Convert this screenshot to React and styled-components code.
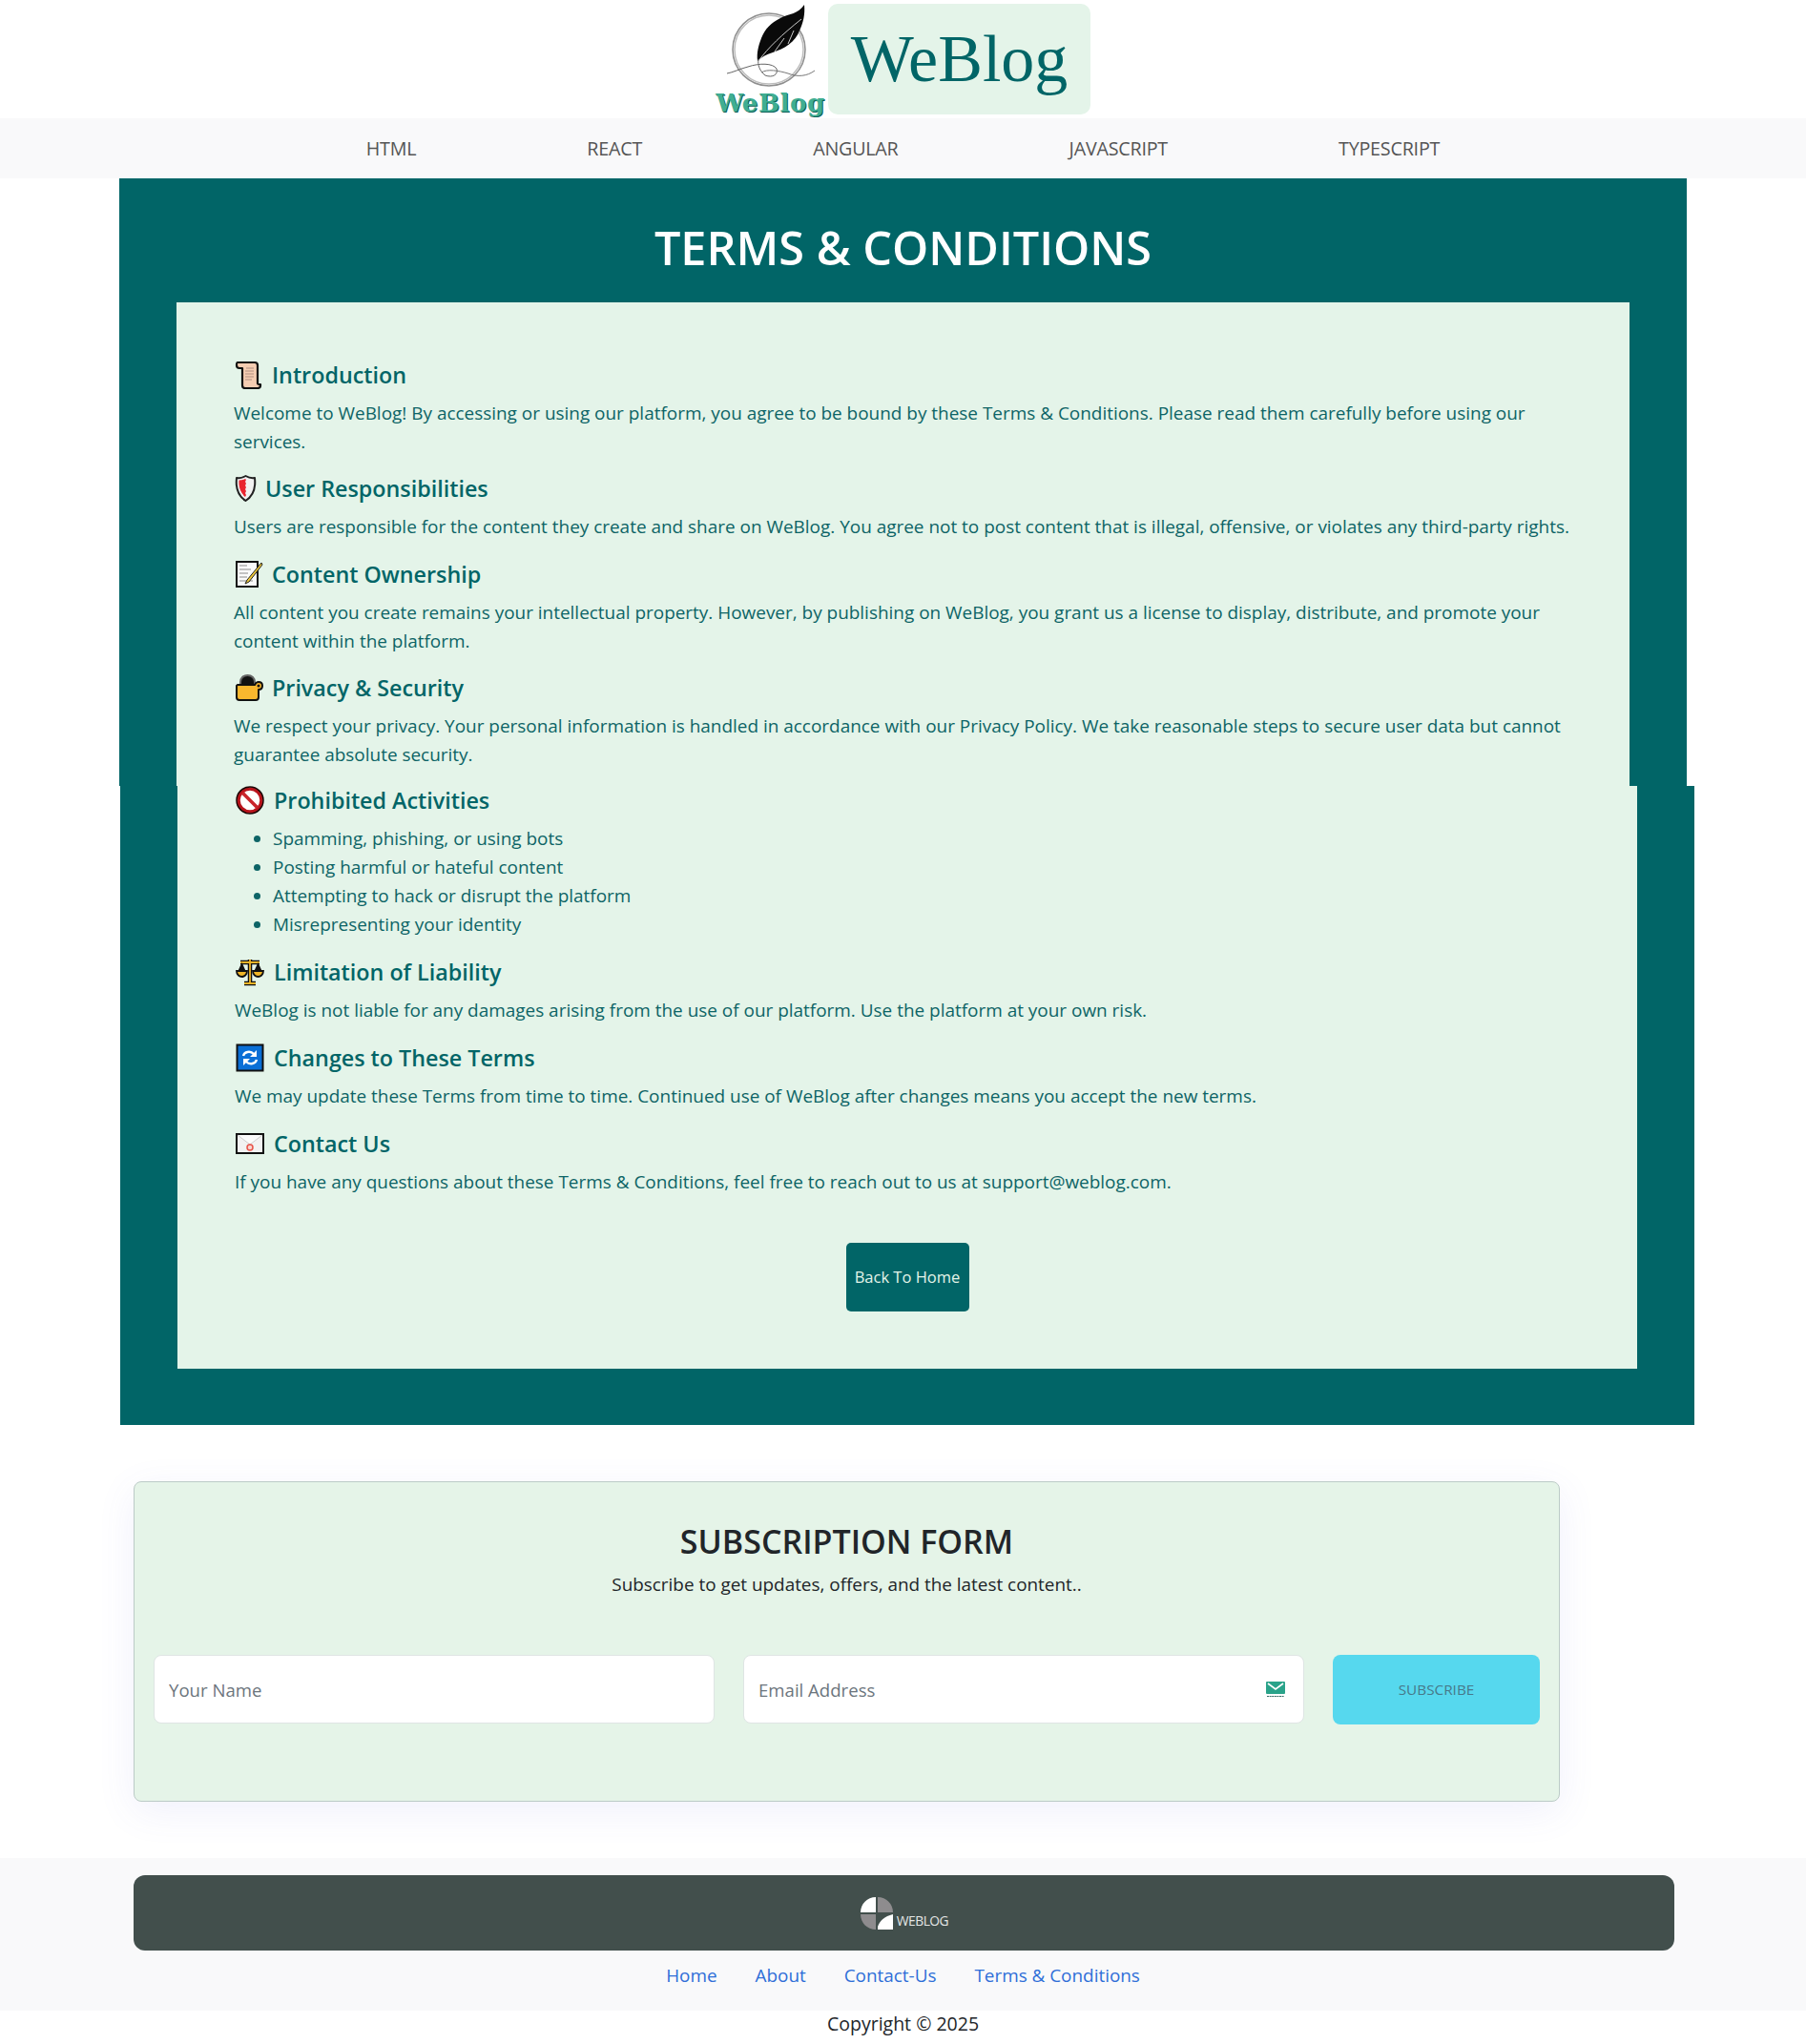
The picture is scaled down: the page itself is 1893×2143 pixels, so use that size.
import React from "react";
import styled, { createGlobalStyle } from "styled-components";

const FONT = `"Open Sans", "Noto Sans", sans-serif`;
const TEAL = "#016567";
const MINT = "#e4f4e9";

const Global = createGlobalStyle`
  * { box-sizing: border-box; }
  html, body { margin: 0; padding: 0; background: #fff; }
  body { font-family: ${FONT}; color: #212529; }
  input::placeholder { color: #6c757d; opacity: 1; }
`;

const Page = styled.div`
  width: 1893px;
  height: 2143px;
  overflow: hidden;
`;
const Brand = styled.header`
  height: 124px;
  display: flex;
  justify-content: center;
  align-items: flex-start;
  gap: 3px;
`;
const LogoMark = styled.div`
  width: 115px;
  display: flex;
  flex-direction: column;
  align-items: center;
`;
const LogoWord = styled.span`
  font-family: "DejaVu Serif", serif;
  font-weight: 700;
  font-size: 26px;
  line-height: 30px;
  letter-spacing: 0.6px;
  color: #3fae92;
  text-shadow: 1px 1px 0 #0d5f57;
  margin-top: 1px;
  white-space: nowrap;
`;
const BrandBox = styled.div`
  width: 275px;
  height: 116px;
  margin-top: 4px;
  background: ${MINT};
  border-radius: 10px;
  display: flex;
  align-items: center;
  justify-content: center;
  font-family: "Liberation Serif", serif;
  font-size: 70px;
  line-height: 1;
  color: ${TEAL};
`;
const NavBar = styled.nav`
  height: 63px;
  background: #f9f9fa;
  display: flex;
  justify-content: center;
  align-items: center;
  gap: 179px;
`;
const NavItem = styled.a`
  font-size: 19.7px;
  color: #555;
  letter-spacing: -0.2px;
`;
const Teal = styled.section`
  background: ${TEAL};
  width: ${(p) => p.$width}px;
  margin-left: ${(p) => p.$left}px;
  padding: 0 60px ${(p) => p.$bottom}px;
`;
const TitleBar = styled.div`
  height: 130px;
  padding-top: 14px;
  display: flex;
  align-items: center;
  justify-content: center;
`;
const Title = styled.h1`
  margin: 0;
  font-size: 48.6px;
  line-height: 60px;
  font-weight: 600;
  color: #fff;
`;
const Block = styled.div`
  &:last-child { margin-bottom: 0; }
`;
const Panel = styled.div`
  background: ${MINT};
  padding: ${(p) => p.$padding};
  ${Block} { margin-bottom: ${(p) => p.$blockGap}px; }
  ${Block}:last-child { margin-bottom: 0; }
`;
const Heading = styled.h2`
  margin: 0 0 ${(p) => (p.$tight ? 10 : 8)}px;
  padding-left: 1px;
  display: flex;
  align-items: center;
  gap: ${(p) => p.$gap}px;
  font-size: 23.3px;
  line-height: ${(p) => (p.$tight ? 30 : 34)}px;
  font-weight: 600;
  color: ${TEAL};
`;
const Body = styled.p`
  margin: 0;
  font-size: 18.95px;
  line-height: 30px;
  color: #0d6466;
`;
const List = styled.ul`
  margin: 0;
  padding-left: 40px;
  font-size: 18.95px;
  line-height: 30px;
  color: #0d6466;
`;
const Center = styled.div`
  display: flex;
  justify-content: center;
  margin-top: 49px;
`;
const BackButton = styled.button`
  width: 129px;
  height: 72px;
  border: 0;
  border-radius: 5px;
  background: ${TEAL};
  color: #e4f4e9;
  font-family: ${FONT};
  font-size: 16.5px;
  padding: 0;
`;
const Card = styled.section`
  width: 1495px;
  height: 336px;
  margin: 59px 0 59px 140px;
  padding: 40px 20px 0;
  background: #e5f4e8;
  border: 1px solid #bccbc7;
  border-radius: 8px;
  box-shadow: 0 10px 40px rgba(90, 90, 220, 0.09);
  text-align: center;
`;
const CardTitle = styled.h2`
  margin: 0 0 8px;
  font-size: 34px;
  line-height: 44px;
  font-weight: 600;
  color: #212529;
`;
const CardText = styled.p`
  margin: 0 0 59px;
  font-size: 18.9px;
  line-height: 30px;
  color: #212529;
`;
const FormRow = styled.form`
  display: flex;
  gap: 30px;
  align-items: center;
`;
const Field = styled.div`
  position: relative;
  width: 588px;
  height: 72px;
`;
const Input = styled.input`
  width: 100%;
  height: 100%;
  padding: 0 15px;
  border: 1px solid #dfe5e4;
  border-radius: 8px;
  background: #fff;
  font-family: ${FONT};
  font-size: 18.6px;
`;
const FieldIcon = styled.svg`
  position: absolute;
  right: 20px;
  top: 27px;
  width: 20px;
  height: 18px;
`;
const Subscribe = styled.button`
  width: 217px;
  height: 73px;
  border: 0;
  border-radius: 8px;
  background: #56d8ee;
  color: #47798a;
  font-family: ${FONT};
  font-size: 15.3px;
  padding: 0;
`;
const Footer = styled.footer`
  background: #f9f9fa;
  height: 160px;
  padding-top: 18px;
`;
const FootBar = styled.div`
  width: 1615px;
  height: 79px;
  margin-left: 140px;
  background: #424f4c;
  border-radius: 12px;
  display: flex;
  justify-content: center;
  padding-top: 22px;
  gap: 3px;
`;
const FootWord = styled.span`
  font-family: "Open Sans", sans-serif;
  font-size: 13.8px;
  line-height: 18px;
  height: 18px;
  margin-top: 17px;
  letter-spacing: -0.5px;
  color: #e4e6e5;
`;
const FootLinks = styled.div`
  height: 63px;
  padding-bottom: 10px;
  display: flex;
  justify-content: center;
  align-items: center;
  gap: 40px;
`;
const FootLink = styled.a`
  font-size: 18.9px;
  color: #2f6fd8;
`;
const Copyright = styled.div`
  text-align: center;
  font-size: 19.5px;
  line-height: 28px;
  color: #212529;
`;

const Emoji = styled.svg`
  width: ${(p) => p.$w || 30}px;
  height: 30px;
  flex: none;
`;

const Scroll = () => (
  <Emoji viewBox="0 0 30 30">
    <path d="M3 2h18c2 0 3 1 3 3v19c0 1 1 1 3 1v1c0 2-1 3-3 3H11c-2 0-3-1-3-3V8H5C3 8 2 7 2 5s0-3 1-3z" fill="#f5cdb2" stroke="#111" strokeWidth="2.200" strokeLinejoin="round" />
    <path d="M12 8h8M11 11h9M11 14h9M11 17h9M11 20h7" stroke="#b08f80" strokeWidth="1" />
  </Emoji>
);
const Shield = () => (
  <Emoji $w={23} viewBox="0 0 23 30">
    <path d="M11.500 2C15 4 18 4.500 21 4c1 9 0 18-9.500 24C2 22 1 13 2 4c3 .5 6 0 9.500-2z" fill="#f1f1f1" stroke="#222" strokeWidth="2" strokeLinejoin="round" />
    <path d="M11 5C9 6 7 6.500 4.500 6.500 4 13 5.500 19 11 24l1-2-1-2 1-2-1-2 1-2-1-2 1-2-1-2 1-2z" fill="#e9242f" />
  </Emoji>
);
const Memo = () => (
  <Emoji viewBox="0 0 30 30">
    <path d="M2 2h22v26H2z" fill="#fafafa" stroke="#111" strokeWidth="2" />
    <path d="M5 6h8M5 10h12M5 14h9M5 18h8M5 22h14" stroke="#8b8b8b" strokeWidth="1" />
    <path d="M28 3 13 21l-2 4 4-2L29 5z" fill="#f0c93a" stroke="#222" strokeWidth="1" />
  </Emoji>
);
const Lock = () => (
  <Emoji viewBox="0 0 30 30">
    <path d="M6 12V9c0-4 3-7 7.500-7S21 5 21 9v3" fill="#111" stroke="#666" strokeWidth="2" />
    <path d="M3 12h18c1-2 2-3 4-3 3 0 4 2 4 4 0 3-2 4-4 4v8c0 2-1 3-3 3H5c-2 0-3-1-3-3V13z" fill="#f9b72e" stroke="#111" strokeWidth="2" strokeLinejoin="round" />
    <circle cx="25" cy="13" r="1.500" fill="#111" />
  </Emoji>
);
const Prohibited = () => (
  <Emoji viewBox="0 0 30 30">
    <circle cx="15" cy="15" r="12" fill="#fff" stroke="#b8131b" strokeWidth="3.500" />
    <circle cx="15" cy="15" r="14" fill="none" stroke="#1a0505" strokeWidth="1.500" />
    <path d="M7 7l16 16" stroke="#c9242b" strokeWidth="3.500" />
  </Emoji>
);
const Scales = () => (
  <Emoji viewBox="0 0 30 30">
    <path d="M15 2v24M9 27h12M5 5h20" stroke="#111" strokeWidth="4.500" />
    <path d="M15 2v24M9 27h12M5 5h20" stroke="#f0b528" strokeWidth="1.800" />
    <path d="M6.500 5 2 15h9zM23.500 5 19 15h9z" fill="#111" />
    <path d="M1 14c0 4 3 6 5.500 6S12 18 12 14zM18 14c0 4 3 6 5.500 6S29 18 29 14z" fill="#f0b528" stroke="#111" strokeWidth="1.800" />
  </Emoji>
);
const Arrows = () => (
  <Emoji viewBox="0 0 30 30">
    <rect x="1.500" y="1.500" width="27" height="27" fill="#0a6fd6" stroke="#111" strokeWidth="2" />
    <path d="M8 13c1-4 7-6 11-2M22 17c-1 4-7 6-11 2" fill="none" stroke="#fff" strokeWidth="2.400" />
    <path d="M22 7v7h-7zM8 23v-7h7z" fill="#fff" />
  </Emoji>
);
const Envelope = () => (
  <Emoji viewBox="0 0 30 30">
    <rect x="1" y="5" width="28" height="20" fill="#f2f2f2" stroke="#111" strokeWidth="2" />
    <path d="M2 6l13 10L28 6" fill="#fbfbfb" stroke="#cfcfcf" strokeWidth="1" />
    <circle cx="15" cy="19" r="3" fill="#f6d5d0" stroke="#e8534a" strokeWidth="1.500" />
  </Emoji>
);

const FeatherLogo = () => (
  <svg width="115" height="92" viewBox="0 0 115 92">
    <circle cx="56" cy="52" r="38" fill="none" stroke="#8f8f8f" strokeWidth="1.500" />
    <circle cx="56" cy="52" r="36" fill="none" stroke="#bdbdbd" strokeWidth="1.500" />
    <path d="M93 5C86 15 78 14 68 19 58 24 52 30 48 40 45 48 43 55 44 64 48 60 53 57 60 55 72 51 84 44 88 32 92 24 94 15 93 5z" fill="#0a0a0a" />
    <path d="M45 64C55 50 70 36 90 20M62 54 72 40M76 46 82 32" fill="none" stroke="#dcdcdc" strokeWidth=".9" />
    <path d="M45 62C44 68 46 74 52 79 60 82 66 78 64 72 60 66 46 66 34 70 26 72 18 76 12 77" fill="none" stroke="#666" strokeWidth="1" />
    <path d="M48 76C54 72 66 74 76 77 86 81 96 80 104 74" fill="none" stroke="#777" strokeWidth="1" />
  </svg>
);
const FootLogo = () => (
  <svg width="36" height="36" viewBox="0 0 36 36">
    <path d="M17 1V17H1C1 8 8 1 17 1z" fill="#fff" />
    <path d="M19 1c9 0 16 7 16 16v0H19z" fill="#8e8c8e" />
    <path d="M1 19H17V35C8 35 1 28 1 19z" fill="#8e8c8e" />
    <path d="M35 19V35H19V32C21 26 26 21 35 19z" fill="#fff" />
  </svg>
);

const Tile = ({ title, icon, gap = 9, tight, children }) => (
  <Block>
    <Heading $gap={gap} $tight={tight}>
      {icon}
      {title}
    </Heading>
    {children}
  </Block>
);

export default function App() {
  return (
    <Page>
      <Global />
      <Brand>
        <LogoMark>
          <FeatherLogo />
          <LogoWord>WeBlog</LogoWord>
        </LogoMark>
        <BrandBox>WeBlog</BrandBox>
      </Brand>
      <NavBar>
        {["HTML", "REACT", "ANGULAR", "JAVASCRIPT", "TYPESCRIPT"].map((n) => (
          <NavItem key={n}>{n}</NavItem>
        ))}
      </NavBar>
      <Teal $left={125} $width={1643} $bottom={0}>
        <TitleBar>
          <Title>TERMS &amp; CONDITIONS</Title>
        </TitleBar>
        <Panel $padding="59px 50px 18px 60px" $blockGap={17.34}>
          <Tile title="Introduction" icon={<Scroll />}>
            <Body>Welcome to WeBlog! By accessing or using our platform, you agree to be bound by these Terms &amp; Conditions. Please read them carefully before using our services.</Body>
          </Tile>
          <Tile title="User Responsibilities" icon={<Shield />}>
            <Body>Users are responsible for the content they create and share on WeBlog. You agree not to post content that is illegal, offensive, or violates any third-party rights.</Body>
          </Tile>
          <Tile title="Content Ownership" icon={<Memo />}>
            <Body>All content you create remains your intellectual property. However, by publishing on WeBlog, you grant us a license to display, distribute, and promote your content within the platform.</Body>
          </Tile>
          <Tile title="Privacy &amp; Security" icon={<Lock />}>
            <Body>We respect your privacy. Your personal information is handled in accordance with our Privacy Policy. We take reasonable steps to secure user data but cannot guarantee absolute security.</Body>
          </Tile>
        </Panel>
      </Teal>
      <Teal $left={126} $width={1650} $bottom={59}>
        <Panel $padding="0 60px 60px" $blockGap={18}>
          <Tile title="Prohibited Activities" icon={<Prohibited />} tight gap={10}>
            <List>
              <li>Spamming, phishing, or using bots</li>
              <li>Posting harmful or hateful content</li>
              <li>Attempting to hack or disrupt the platform</li>
              <li>Misrepresenting your identity</li>
            </List>
          </Tile>
          <Tile title="Limitation of Liability" icon={<Scales />} gap={10}>
            <Body>WeBlog is not liable for any damages arising from the use of our platform. Use the platform at your own risk.</Body>
          </Tile>
          <Tile title="Changes to These Terms" icon={<Arrows />} gap={10}>
            <Body>We may update these Terms from time to time. Continued use of WeBlog after changes means you accept the new terms.</Body>
          </Tile>
          <Tile title="Contact Us" icon={<Envelope />} gap={10}>
            <Body>If you have any questions about these Terms &amp; Conditions, feel free to reach out to us at support@weblog.com.</Body>
          </Tile>
          <Center>
            <BackButton>Back To Home</BackButton>
          </Center>
        </Panel>
      </Teal>
      <Card>
        <CardTitle>SUBSCRIPTION FORM</CardTitle>
        <CardText>Subscribe to get updates, offers, and the latest content..</CardText>
        <FormRow>
          <Field>
            <Input placeholder="Your Name" />
          </Field>
          <Field>
            <Input placeholder="Email Address" />
            <FieldIcon viewBox="0 0 20 18">
              <rect x="0" y="1" width="20" height="13" rx="1" fill="#2aa38a" />
              <path d="M2 3l8 6 8-6" fill="none" stroke="#fff" strokeWidth="1.600" />
              <path d="M1 16.500h18" stroke="#3b6b66" strokeWidth="1.200" strokeDasharray="2 .6" />
            </FieldIcon>
          </Field>
          <Subscribe type="button">SUBSCRIBE</Subscribe>
        </FormRow>
      </Card>
      <Footer>
        <FootBar>
          <FootLogo />
          <FootWord>WEBLOG</FootWord>
        </FootBar>
        <FootLinks>
          <FootLink>Home</FootLink>
          <FootLink>About</FootLink>
          <FootLink>Contact-Us</FootLink>
          <FootLink>Terms &amp; Conditions</FootLink>
        </FootLinks>
      </Footer>
      <Copyright>Copyright © 2025</Copyright>
    </Page>
  );
}
